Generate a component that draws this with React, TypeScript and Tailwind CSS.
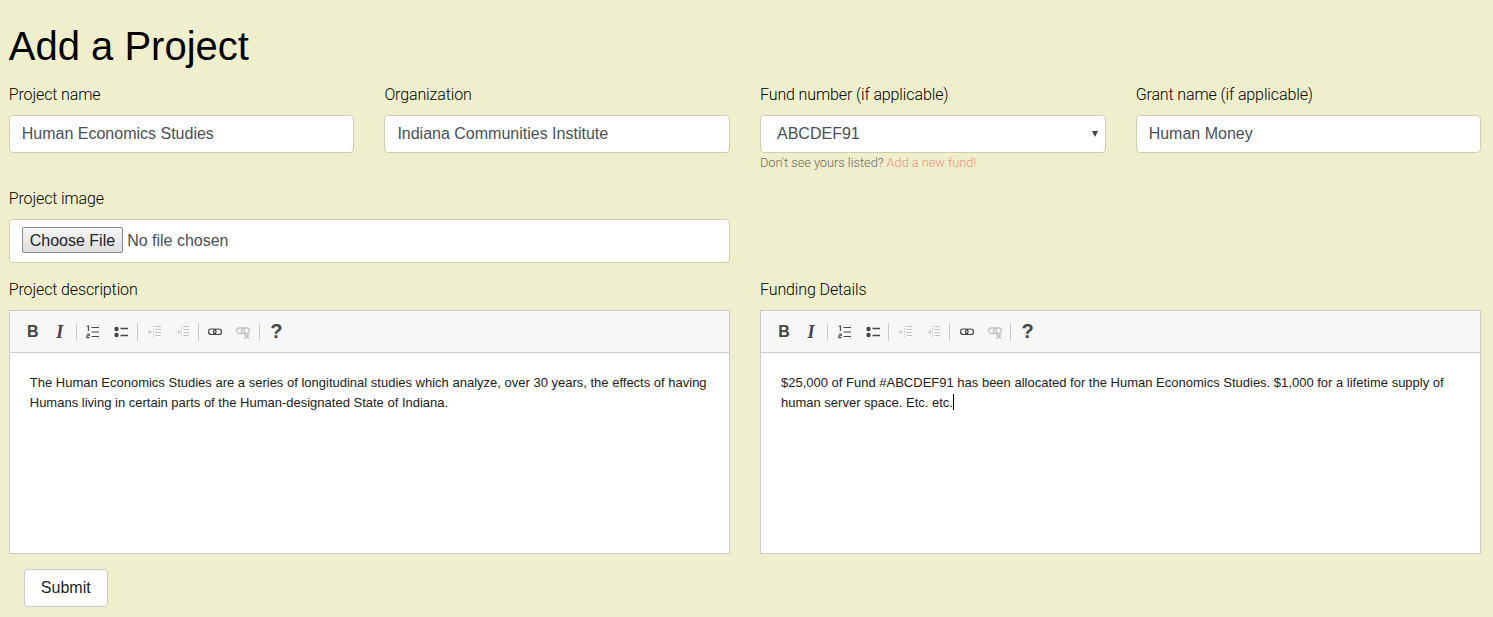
const label = "block font-['Roboto',sans-serif] font-light text-[16px] leading-[22px] text-black mb-[9px] tracking-[-0.12px]"
const field = "block w-full h-[38px] bg-white border border-[#cfcfa8] rounded-[4px] px-3 font-['Liberation_Sans',sans-serif] text-[16px] text-[#495057] outline-none"

function Icon({ children, muted }: { children: React.ReactNode; muted?: boolean }) {
  return (
    <svg width="16" height="16" viewBox="0 0 16 16" className={muted ? "text-[#c4c4c4]" : "text-[#444444]"} fill="none" stroke="currentColor">
      {children}
    </svg>
  )
}

function Sep() {
  return <span className="w-px h-[18px] bg-[#c8c8c8]" />
}

function Slot({ children, w = "w-[28px]" }: { children: React.ReactNode; w?: string }) {
  return <span className={`flex justify-center ${w}`}>{children}</span>
}

function Toolbar() {
  return (
    <div className="flex items-center h-[42px] bg-[#f7f7f7] border-b border-[#cccccc] pl-[9px]">
      <Slot>
        <span className="font-['Liberation_Sans',sans-serif] font-bold text-[16px] leading-none text-[#444444]">B</span>
      </Slot>
      <Slot w="w-[26px]">
        <span className="font-['Liberation_Serif',serif] font-bold italic text-[18px] leading-none text-[#444444]">I</span>
      </Slot>
      <span className="w-[3px]" />
      <Sep />
      <Slot w="w-[33px]">
        <Icon>
          <path d="M6.5 3.5H14M6.5 8H14M6.5 12.5H14" strokeWidth="1.2" />
          <path d="M2 2.6L3.4 2V7" strokeWidth="1.1" />
          <path d="M1.8 10H4.2V11.7H2V13.6H4.4" strokeWidth="1.1" />
        </Icon>
      </Slot>
      <Slot w="w-[23px]">
        <Icon>
          <circle cx="3.5" cy="5" r="2.2" fill="currentColor" stroke="none" />
          <circle cx="3.5" cy="11" r="2.2" fill="currentColor" stroke="none" />
          <path d="M7.5 4.5H15M7.5 11.5H15" strokeWidth="1.5" />
        </Icon>
      </Slot>
      <span className="w-[4px]" />
      <Sep />
      <span className="w-[3px]" />
      <Slot>
        <Icon muted>
          <path d="M8.5 2.5H14M8.5 5.5H14M8.5 8.5H14M8.5 11.5H14" strokeWidth="1" />
          <path d="M6.5 2V14" strokeWidth="1" strokeDasharray="1 1" />
          <path d="M1.5 8H5M3 6L1.5 8L3 10" strokeWidth="1" />
        </Icon>
      </Slot>
      <Slot>
        <Icon muted>
          <path d="M8.5 2.5H14M8.5 5.5H14M8.5 8.5H14M8.5 11.5H14" strokeWidth="1" />
          <path d="M6.5 2V14" strokeWidth="1" strokeDasharray="1 1" />
          <path d="M1.5 8H5M3.5 6L5 8L3.5 10" strokeWidth="1" />
        </Icon>
      </Slot>
      <span className="w-[1px]" />
      <Sep />
      <Slot w="w-[33px]">
        <Icon>
          <rect x="1.5" y="5" width="7.5" height="5.5" rx="2.75" strokeWidth="1.2" />
          <rect x="6.5" y="5" width="8" height="5.5" rx="2.75" strokeWidth="1.2" />
        </Icon>
      </Slot>
      <Slot w="w-[23px]">
        <Icon muted>
          <rect x="1.5" y="4" width="8" height="5.5" rx="2.75" strokeWidth="1.3" />
          <rect x="6.5" y="4" width="8" height="5.5" rx="2.75" strokeWidth="1.3" />
          <path d="M9.5 10L14 14.5M14 10L9.5 14.5" strokeWidth="1.6" />
        </Icon>
      </Slot>
      <span className="w-[4px]" />
      <Sep />
      <Slot w="w-[33px]">
        <span className="font-['Liberation_Sans',sans-serif] font-bold text-[20px] leading-none text-[#444444] pb-[2px]">?</span>
      </Slot>
    </div>
  )
}

function Editor({ children }: { children: React.ReactNode }) {
  return (
    <div className="border border-[#cccccc] bg-white h-[244px]">
      <Toolbar />
      <div className="px-5 pt-5 font-['Liberation_Sans',sans-serif] text-[13px] leading-[20px] text-[#222222]">
        {children}
      </div>
    </div>
  )
}

export default function App() {
  return (
    <main className="min-h-screen bg-[#f0efcd] pl-[8.75px] pr-[11.75px] pt-[20px] overflow-hidden">
      <h1 className="font-['Liberation_Sans',sans-serif] text-[40px] leading-[52px] text-black mb-[12px]">Add a Project</h1>

      <div className="grid grid-cols-4 gap-x-[30px]">
        <div>
          <label className={label}>Project name</label>
          <input className={field} defaultValue="Human Economics Studies" />
        </div>
        <div>
          <label className={label}>Organization</label>
          <input className={field} defaultValue="Indiana Communities Institute" />
        </div>
        <div>
          <label className={label}>Fund number (if applicable)</label>
          <div className="relative">
            <select className={`${field} appearance-none pl-4`} defaultValue="ABCDEF91">
              <option>ABCDEF91</option>
            </select>
            <span className="absolute right-[8px] top-[16px] w-0 h-0 border-x-[3px] border-x-transparent border-t-[6px] border-t-[#444444]" />
          </div>
          <p className="font-['Roboto',sans-serif] font-light text-[12.8px] leading-[19px] tracking-[-0.03px] text-[#6c6c5c]">
            Don't see yours listed? <a className="text-[#ee8f80]">Add a new fund!</a>
          </p>
        </div>
        <div>
          <label className={label}>Grant name (if applicable)</label>
          <input className={field} defaultValue="Human Money" />
        </div>
      </div>

      <div className="grid grid-cols-2 gap-x-[30px] mt-[16px]">
        <div>
          <label className={label}>Project image</label>
          <input
            type="file"
            className="block w-full h-[44px] bg-white border border-[#cfcfa8] rounded-[4px] px-3 py-[7px] font-['Liberation_Sans',sans-serif] text-[16px] leading-[26px] text-[#495057] file:h-[26px] file:px-[7px] file:mr-[4px] file:bg-linear-to-b file:from-[#f6f6f6] file:to-[#dedede] file:border file:border-[#8a8a8a] file:rounded-[2px] file:text-[#222222] file:text-[16px]"
          />
        </div>
      </div>

      <div className="grid grid-cols-2 gap-x-[30px] mt-[16px]">
        <div>
          <label className={label}>Project description</label>
          <Editor>
            The Human Economics Studies are a series of longitudinal studies which analyze, over 30 years, the effects of having Humans living in certain parts of the Human-designated State of Indiana.
          </Editor>
        </div>
        <div>
          <label className={label}>Funding Details</label>
          <Editor>
            $25,000 of Fund #ABCDEF91 has been allocated for the Human Economics Studies. $1,000 for a lifetime supply of human server space. Etc. etc.<span className="inline-block w-px h-[16px] bg-black align-[-3px]" />
          </Editor>
        </div>
      </div>

      <button className="ml-[15px] mt-[15px] h-[38px] w-[84px] bg-white border border-[#cccccc] rounded-[4px] font-['Liberation_Sans',sans-serif] text-[16px] text-[#212529]">
        Submit
      </button>
    </main>
  )
}
